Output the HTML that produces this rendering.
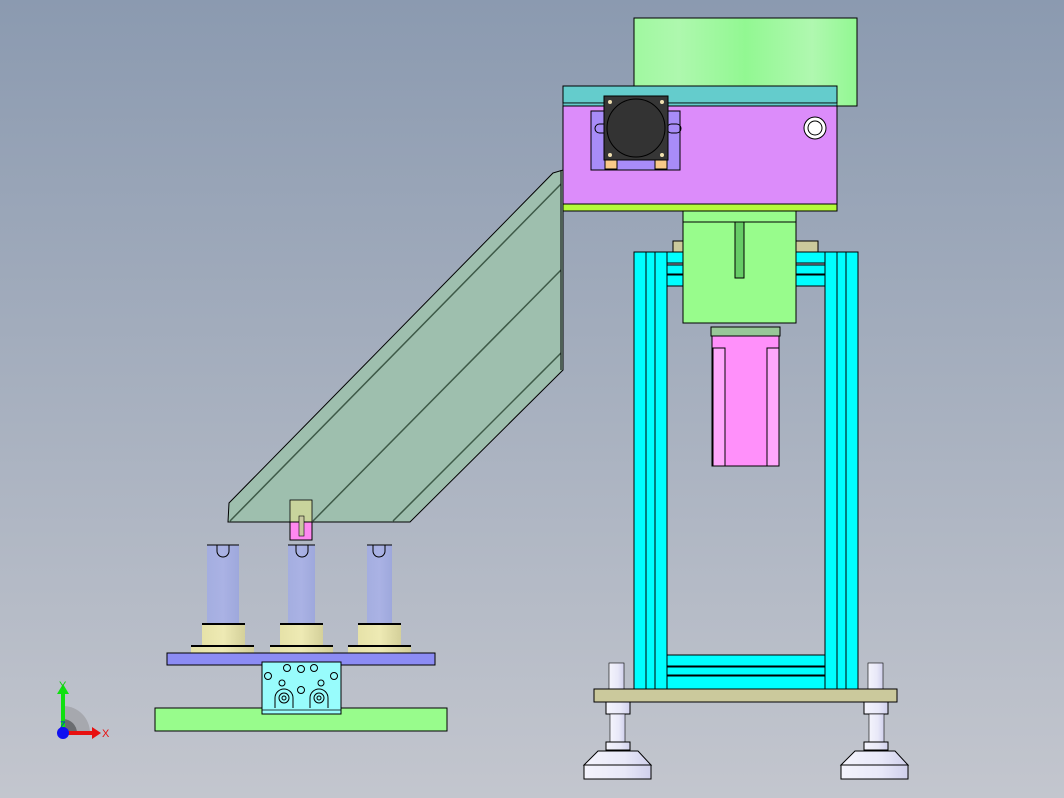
<!DOCTYPE html>
<html><head><meta charset="utf-8"><style>
html,body{margin:0;padding:0;width:1064px;height:798px;overflow:hidden}
svg{display:block}
text{font-family:"Liberation Sans",sans-serif}
</style></head><body>
<svg width="1064" height="798" viewBox="0 0 1064 798" xmlns="http://www.w3.org/2000/svg">
<defs>
<linearGradient id="bg" x1="0" y1="0" x2="0" y2="1">
<stop offset="0" stop-color="#8b9ab0"/><stop offset="1" stop-color="#c3c6ce"/></linearGradient>
<linearGradient id="drum" x1="0" y1="0" x2="1" y2="0">
<stop offset="0" stop-color="#a0f8a0"/><stop offset="0.2" stop-color="#aef8ae"/><stop offset="0.5" stop-color="#92f892"/><stop offset="0.8" stop-color="#b0f8b0"/><stop offset="1" stop-color="#92f892"/></linearGradient>
<linearGradient id="cyl" x1="0" y1="0" x2="1" y2="0">
<stop offset="0" stop-color="#a4aee0"/><stop offset="0.5" stop-color="#aab2e4"/><stop offset="1" stop-color="#9ea8dc"/></linearGradient>
<linearGradient id="ring" x1="0" y1="0" x2="1" y2="0">
<stop offset="0" stop-color="#e6e2a8"/><stop offset="0.5" stop-color="#eeeab4"/><stop offset="1" stop-color="#d4d09a"/></linearGradient>
<linearGradient id="wh" x1="0" y1="0" x2="1" y2="0">
<stop offset="0" stop-color="#f4f4fc"/><stop offset="0.6" stop-color="#e8e8f8"/><stop offset="1" stop-color="#d0d0ec"/></linearGradient>
</defs>
<rect width="1064" height="798" fill="url(#bg)"/>

<!-- chute -->
<polygon points="553,173 563,170 563,370 410,522 228,522 229,503" fill="#9ebfae" stroke="#000" stroke-width="1"/>
<line x1="561" y1="184" x2="230" y2="521" stroke="#3e5a48" stroke-width="1.5"/>
<line x1="561" y1="270" x2="313" y2="521" stroke="#3e5a48" stroke-width="1.5"/>
<line x1="561" y1="353" x2="393" y2="521" stroke="#3e5a48" stroke-width="1.5"/>
<line x1="561" y1="170" x2="561" y2="370" stroke="#000"/>

<!-- top drum -->
<rect x="634" y="18" width="223" height="88" fill="url(#drum)" stroke="#000"/>
<!-- cyan plate -->
<rect x="563" y="86" width="274" height="17" fill="#64cccc" stroke="#000"/>
<rect x="563" y="103" width="274" height="3" fill="#64cccc" stroke="#000" stroke-width="0.8"/>
<!-- pink box -->
<rect x="563" y="106" width="274" height="98" fill="#dc8cfa" stroke="#000"/>
<rect x="563" y="204" width="274" height="7" fill="#b4fa3a" stroke="#000"/>
<!-- motor plate -->
<rect x="591" y="111" width="89" height="59" fill="#a88cf8" stroke="#000"/>
<rect x="595" y="124" width="14" height="9" rx="4.5" fill="none" stroke="#000"/>
<rect x="667" y="124" width="14" height="9" rx="4.5" fill="none" stroke="#000"/>
<rect x="605" y="160" width="12" height="9" fill="#f8c888" stroke="#000"/>
<rect x="655" y="160" width="12" height="9" fill="#f8c888" stroke="#000"/>
<rect x="604" y="96" width="64" height="64" fill="#363636" stroke="#000"/>
<circle cx="636" cy="128" r="29" fill="#333" stroke="#000"/>
<circle cx="610" cy="102" r="2" fill="#f0e0b0"/><circle cx="662" cy="102" r="2" fill="#f0e0b0"/>
<circle cx="610" cy="155" r="2" fill="#f0e0b0"/><circle cx="662" cy="155" r="2" fill="#f0e0b0"/>
<circle cx="815" cy="128" r="11" fill="#fff" stroke="#000"/>
<circle cx="815" cy="128" r="7" fill="#fff" stroke="#000"/>

<!-- tan blocks -->
<rect x="673" y="241" width="145" height="11" fill="#cbc99c" stroke="#000"/>
<!-- frame crossbars top -->
<g fill="#00ffff" stroke="#000">
<rect x="667" y="252" width="158" height="11"/>
<rect x="667" y="265" width="158" height="9"/>
<rect x="667" y="275" width="158" height="11"/>
<!-- bottom crossbars -->
<rect x="667" y="655" width="158" height="11"/>
<rect x="667" y="667" width="158" height="8"/>
<rect x="667" y="676" width="158" height="13"/>
<!-- verticals -->
<rect x="634" y="252" width="12" height="437"/>
<rect x="646" y="252" width="9" height="437"/>
<rect x="655" y="252" width="12" height="437"/>
<rect x="825" y="252" width="12" height="437"/>
<rect x="837" y="252" width="9" height="437"/>
<rect x="846" y="252" width="12" height="437"/>
</g>
<!-- green block -->
<rect x="683" y="211" width="113" height="112" fill="#98fc8c" stroke="#000"/>
<line x1="683" y1="222" x2="796" y2="222" stroke="#000"/>
<rect x="735" y="222" width="9" height="56" fill="#66cc66" stroke="#000"/>
<!-- pink motor -->
<rect x="711" y="327" width="69" height="9" fill="#98c898" stroke="#000"/>
<rect x="712" y="336" width="67" height="130" fill="#ff90fa" stroke="#000"/>
<rect x="713" y="348" width="12" height="118" fill="#ffa8fc" stroke="#000"/>
<rect x="767" y="348" width="12" height="118" fill="#ffa8fc" stroke="#000"/>

<!-- feet -->
<g stroke="#000">
<rect x="609" y="663" width="15" height="26" fill="url(#wh)" stroke-width="0.6"/>
<rect x="868" y="663" width="15" height="26" fill="url(#wh)" stroke-width="0.6"/>
<rect x="594" y="689" width="303" height="13" fill="#cbc99c"/>
<rect x="606" y="702" width="24" height="12" fill="url(#wh)"/>
<rect x="864" y="702" width="24" height="12" fill="url(#wh)"/>
<rect x="610" y="714" width="15" height="28" fill="url(#wh)" stroke-width="0.6"/>
<rect x="869" y="714" width="15" height="28" fill="url(#wh)" stroke-width="0.6"/>
<rect x="606" y="742" width="24" height="8" fill="url(#wh)"/>
<rect x="864" y="742" width="24" height="8" fill="url(#wh)"/>
<polygon points="598,751 638,751 651,765 584,765" fill="url(#wh)"/>
<polygon points="855,751 895,751 908,765 841,765" fill="url(#wh)"/>
<rect x="584" y="765" width="67" height="14" fill="url(#wh)"/>
<rect x="841" y="765" width="67" height="14" fill="url(#wh)"/>
</g>

<!-- left assembly -->
<g stroke="#000">
<rect x="290" y="500" width="22" height="22" fill="#c8d49c" stroke-width="0.8"/>
<rect x="290" y="522" width="22" height="18" fill="#ff88f0"/>
<rect x="299" y="516" width="5" height="20" fill="#c8c8a0" stroke-width="0.6"/>
<rect x="207" y="545" width="32" height="78" fill="url(#cyl)" stroke-width="0"/>
<rect x="288" y="545" width="27" height="78" fill="url(#cyl)" stroke-width="0"/>
<rect x="367" y="545" width="25" height="78" fill="url(#cyl)" stroke-width="0"/>
<line x1="207" y1="545" x2="239" y2="545"/><line x1="288" y1="545" x2="315" y2="545"/><line x1="367" y1="545" x2="392" y2="545"/>
<path d="M217,545 v6 a6,6 0 0 0 12,0 v-6" fill="none"/>
<path d="M296,545 v6 a6,6 0 0 0 12,0 v-6" fill="none"/>
<path d="M373,545 v6 a6,6 0 0 0 12,0 v-6" fill="none"/>
<rect x="202" y="623" width="43" height="22" fill="url(#ring)" stroke-width="0"/>
<rect x="280" y="623" width="43" height="22" fill="url(#ring)" stroke-width="0"/>
<rect x="358" y="623" width="43" height="22" fill="url(#ring)" stroke-width="0"/>
<line x1="202" y1="624" x2="245" y2="624" stroke-width="2"/><line x1="280" y1="624" x2="323" y2="624" stroke-width="2"/><line x1="358" y1="624" x2="401" y2="624" stroke-width="2"/>
<rect x="191" y="646" width="63" height="7" fill="url(#ring)" stroke-width="0"/>
<rect x="270" y="646" width="63" height="7" fill="url(#ring)" stroke-width="0"/>
<rect x="348" y="646" width="63" height="7" fill="url(#ring)" stroke-width="0"/>
<line x1="191" y1="646" x2="254" y2="646" stroke-width="2"/><line x1="270" y1="646" x2="333" y2="646" stroke-width="2"/><line x1="348" y1="646" x2="411" y2="646" stroke-width="2"/>
<rect x="167" y="653" width="268" height="12" fill="#8c8cf4"/>
<rect x="155" y="708" width="292" height="23" fill="#98fc8c"/>
<rect x="262" y="662" width="79" height="52" fill="#98fcfc"/>
<line x1="262" y1="710" x2="341" y2="710" stroke-width="0.8"/>
<g fill="none" stroke-width="1">
<circle cx="287" cy="668" r="3.5"/><circle cx="301" cy="669" r="3.5"/><circle cx="314" cy="668" r="3.5"/>
<circle cx="268" cy="676" r="3.5"/><circle cx="334" cy="676" r="3.5"/>
<circle cx="282" cy="683" r="3"/><circle cx="321" cy="683" r="3"/><circle cx="301" cy="690" r="3.5"/>
<path d="M275,708 v-10 a9,9 0 0 1 18,0 v10"/><circle cx="284" cy="698" r="5"/><circle cx="284" cy="698" r="2"/>
<path d="M310,708 v-10 a9,9 0 0 1 18,0 v10"/><circle cx="319" cy="698" r="5"/><circle cx="319" cy="698" r="2"/>
</g>
</g>

<!-- axis triad -->
<path d="M63,733 L90,733 A27,27 0 0 0 63,706 Z" fill="#a6a8ae"/>
<path d="M63,733 L77,733 A14,14 0 0 0 63,719 Z" fill="#6a6c70"/>
<rect x="61" y="692" width="4" height="41" fill="#10e010"/>
<polygon points="57,694 63,684 69,694" fill="#10e010"/>
<rect x="63" y="731" width="30" height="4" fill="#e81010"/>
<polygon points="92,727 101,733 92,739" fill="#e81010"/>
<circle cx="63" cy="733" r="6" fill="#1010f0"/>
<text x="59" y="689" font-size="11" fill="#10d010">Y</text>
<text x="102" y="737" font-size="11" fill="#e81010">X</text>
<text x="60" y="728" font-size="9" fill="#1010f0">Z</text>
</svg>
</body></html>
